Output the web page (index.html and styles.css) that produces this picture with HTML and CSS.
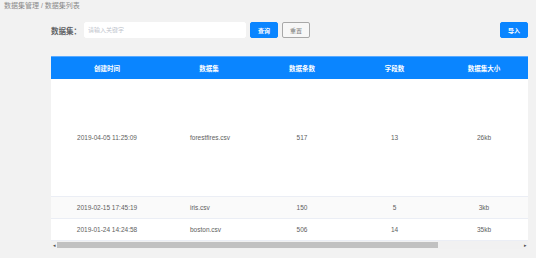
FILE: index.html
```html
<!DOCTYPE html>
<html lang="zh-CN">
  <head>
    <meta charset="UTF-8" />
    <meta name="viewport" content="width=device-width, initial-scale=1.0" />
    <title>数据集列表</title>
    <link rel="stylesheet" href="styles.css">
  </head>
  <body>
    <div class="crumb">数据集管理 / 数据集列表</div>
    <div class="toolbar">
      <label class="field-label">数据集：</label>
      <input type="text" class="search-input" placeholder="请输入关键字" />
      <button class="btn btn-primary">查询</button>
      <button class="btn btn-plain">重置</button>
      <button class="btn btn-primary btn-import">导入</button>
    </div>
    <div class="table-wrap">
      <table class="data-table">
        <colgroup>
          <col style="width: 112px" />
          <col style="width: 92px" />
          <col style="width: 94px" />
          <col style="width: 91px" />
          <col />
        </colgroup>
        <thead>
          <tr>
            <th>创建时间</th>
            <th>数据集</th>
            <th>数据条数</th>
            <th>字段数</th>
            <th>数据集大小</th>
          </tr>
        </thead>
        <tbody>
          <tr class="tall">
            <td>2019-04-05 11:25:09</td>
            <td class="name">forestfires.csv</td>
            <td>517</td>
            <td>13</td>
            <td>26kb</td>
          </tr>
          <tr class="striped">
            <td>2019-02-15 17:45:19</td>
            <td class="name">iris.csv</td>
            <td>150</td>
            <td>5</td>
            <td>3kb</td>
          </tr>
          <tr>
            <td>2019-01-24 14:24:58</td>
            <td class="name">boston.csv</td>
            <td>506</td>
            <td>14</td>
            <td>35kb</td>
          </tr>
        </tbody>
      </table>
      <div class="hscroll">
        <span class="arrow">&#9666;</span>
        <div class="track"><div class="thumb"></div></div>
        <span class="arrow">&#9656;</span>
      </div>
    </div>
  </body>
</html>
```

FILE: styles.css
```css
body {
  margin: 0;
  background-color: #f2f2f2;
  font-family: "Liberation Sans", "Noto Sans CJK SC", sans-serif;
  color: #606266;
}
.crumb {
  font-size: 7px;
  line-height: 10px;
  padding: 1px 4px 0;
  color: #8a8a8a;
}
.toolbar {
  display: flex;
  align-items: center;
  height: 16px;
  margin-top: 11px;
  padding: 0 8px 0 51px;
}
.field-label {
  font-size: 7.5px;
  font-weight: bold;
  color: #606266;
  margin-right: 3px;
}
.search-input {
  box-sizing: border-box;
  width: 162px;
  height: 16px;
  border: 1px solid #fff;
  border-radius: 2px;
  background: #fff;
  font-size: 6px;
  padding: 0 3px;
  font-family: inherit;
  outline: none;
}
.search-input::placeholder {
  color: #c0c4cc;
}
.btn {
  box-sizing: border-box;
  width: 28px;
  height: 16px;
  border-radius: 2px;
  font-size: 6px;
  font-family: inherit;
  padding: 0;
  margin-left: 4px;
  cursor: pointer;
}
.btn-primary {
  background-color: #0a85ff;
  border: 1px solid #0a85ff;
  color: #fff;
  font-weight: bold;
}
.btn-plain {
  background-color: #f7f7f7;
  border: 1px solid #a8a8a8;
  color: #777;
}
.btn-import {
  margin-left: auto;
}
.table-wrap {
  margin: 18px 8px 0 51px;
}
.data-table {
  width: 100%;
  border-collapse: collapse;
  table-layout: fixed;
  background: #fff;
  font-size: 6.5px;
}
.data-table th {
  height: 22px;
  padding: 0;
  background-color: #0a85ff;
  border-top: 1px solid #5aaaff;
  color: #fff;
  font-weight: bold;
  text-align: center;
}
.data-table td {
  height: 21px;
  padding: 0;
  text-align: center;
  border-bottom: 1px solid #ebeef5;
  color: #606060;
}
.data-table td.name {
  text-align: left;
  padding-left: 27px;
}
.data-table tr.tall td {
  height: 117px;
}
.data-table tr.striped td {
  background-color: #fafafa;
}
.hscroll {
  display: flex;
  align-items: center;
  height: 8px;
  background: #f1f1f1;
}
.arrow {
  width: 6px;
  font-size: 5px;
  line-height: 8px;
  text-align: center;
  color: #505050;
}
.track {
  flex: 1;
  height: 6px;
}
.thumb {
  width: 82%;
  height: 100%;
  background: #c1c1c1;
}
```
